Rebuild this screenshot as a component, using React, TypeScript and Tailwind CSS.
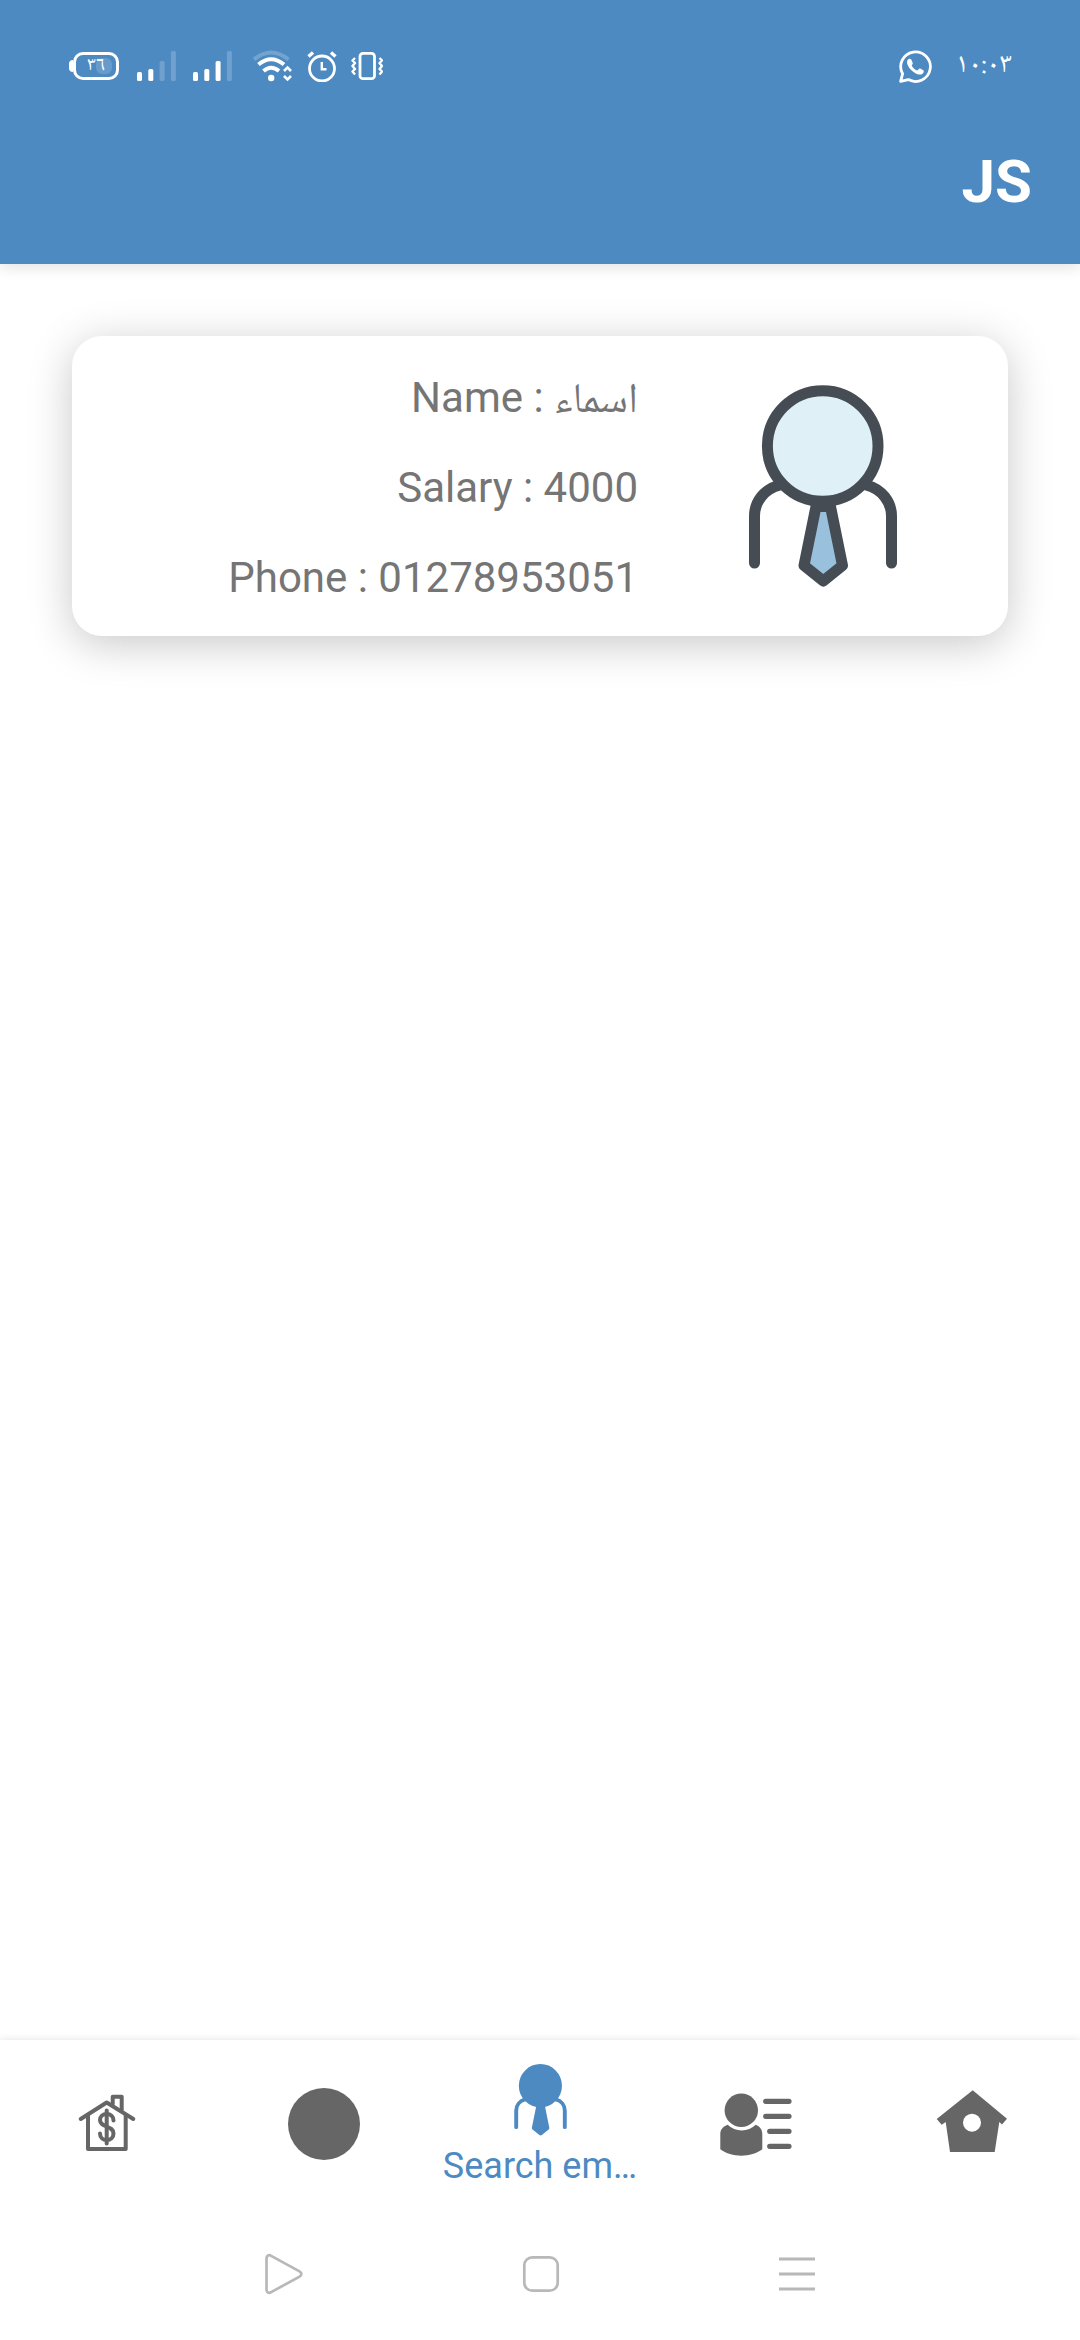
import type { ReactNode } from "react";

function AgentIcon({ className, line, lens, tie }: { className: string; line: string; lens: string; tie: string }) {
  return (
    <svg viewBox="0 0 148 203" className={className} fill="none" stroke={line} strokeWidth="11" strokeLinecap="round" strokeLinejoin="round" aria-hidden="true">
      <path d="M5.5 178V131C5.5 117 15 104 31 100M142.5 178V131C142.5 117 133 104 117 100" />
      <path d="M67 121.500H81.500L93.500 180.500L74.300 196L55 180.500Z" fill={tie} />
      <circle cx="73.700" cy="61" r="55.300" fill={lens} />
    </svg>
  );
}

function Battery() {
  return (
    <div className="flex items-center">
      <div className="h-3 w-1 rounded-l-full bg-white" />
      <div className="relative flex h-7 w-[46px] items-center justify-center rounded-[10px] border-3 border-white">
        <div className="absolute right-1 h-4 w-4 rounded-[6px] bg-white/15" />
        <span className="relative text-[20px] leading-none font-['Noto_Naskh_Arabic','DejaVu_Sans',sans-serif]">٣٦</span>
      </div>
    </div>
  );
}

function Signal({ level }: { level: number }) {
  const bars = [9, 12, 20, 30];
  return (
    <svg viewBox="0 0 40 32" className="h-8 w-10" fill="white" aria-hidden="true">
      {bars.map((h, i) => (
        <rect key={h} x={i * 11.3} y={31 - h} width="5" height={h} rx="1.500" opacity={i < level ? 1 : 0.2} />
      ))}
    </svg>
  );
}

function Wifi() {
  return (
    <svg viewBox="0 0 40 32" className="h-8 w-10" fill="none" stroke="white" aria-hidden="true">
      <path d="M1 9.500Q18 -4.500 35.500 9.500" strokeWidth="4" opacity="0.22" />
      <path d="M5.500 14.500Q18 4 31 14.500" strokeWidth="4" />
      <path d="M10.500 21Q18 14.500 26 21" strokeWidth="4" />
      <circle cx="18.200" cy="28" r="3.200" fill="white" stroke="none" />
      <path d="M31 21L34.500 17.500L38 21M31 26L34.500 29.500L38 26" strokeWidth="2.600" />
    </svg>
  );
}

function Alarm() {
  return (
    <svg viewBox="0 0 30 32" className="h-8 w-[30px]" fill="none" stroke="white" aria-hidden="true">
      <circle cx="15" cy="18.500" r="12.500" strokeWidth="2.800" />
      <path d="M1.500 6.500L6 2.500M28.500 6.500L24 2.500" strokeWidth="3.400" />
      <path d="M14.800 12V19.300H19.500" strokeWidth="2.400" />
    </svg>
  );
}

function Vibrate() {
  return (
    <svg viewBox="0 0 32 32" className="h-8 w-8" fill="none" stroke="white" strokeLinejoin="round" aria-hidden="true">
      <rect x="9" y="3.300" width="14.500" height="25.400" rx="3" strokeWidth="2.800" />
      <path d="M4 8L1.500 10.500L4 13L1.500 16L4 19L1.500 21.500L4 24.500M28.500 8L31 10.500L28.500 13L31 16L28.500 19L31 21.500L28.500 24.500" strokeWidth="2.400" />
    </svg>
  );
}

function WhatsApp() {
  return (
    <svg viewBox="0 0 33 33" className="size-[33px]" fill="none" stroke="white" aria-hidden="true">
      <path d="M1.600 31.400L3.600 23.800A14.800 14.800 0 1 1 9.400 29.600Z" strokeWidth="2.800" strokeLinejoin="round" />
      <path d="M9 9.400C10.500 8.300 12 8.800 12.600 10.300L13.700 13C14 13.800 13.300 14.700 12.700 15.400C13.900 17.800 15.700 19.500 18.200 20.600L20 18.900C20.500 18.500 21 18.500 21.600 18.800L24.300 20.200C25.200 20.800 24.900 22.600 23.600 23.700C21.700 25.200 18.800 24.700 16 23C13 21.200 10.500 18.700 9 15.700C7.900 13.500 7.600 10.900 9 9.400Z" fill="white" stroke="none" />
    </svg>
  );
}

function HouseDollar() {
  return (
    <svg viewBox="0 0 72 72" className="size-18" fill="none" stroke="currentColor" strokeWidth="4" strokeLinecap="round" strokeLinejoin="round" aria-hidden="true">
      <path d="M8.700 31L34.700 14.500L61.300 31" />
      <path d="M16 27V61H53.700V27" />
      <path d="M40.700 16V8.700H49.700V22" />
      <path d="M34.700 22.500V55.500" />
      <path d="M41.500 32.500C41.500 28.500 38.500 26 34.700 26C30.800 26 28 28.500 28 32C28 40 41.500 37 41.500 45.500C41.500 49.500 38.500 52 34.700 52C31 52 28 49.500 28 45.500" />
    </svg>
  );
}

function Disc() {
  return (
    <svg viewBox="0 0 72 72" className="size-18" fill="currentColor" aria-hidden="true">
      <circle cx="36" cy="36" r="36" />
    </svg>
  );
}

function PersonList() {
  return (
    <svg viewBox="0 0 72 72" className="size-18" fill="currentColor" aria-hidden="true">
      <circle cx="21.300" cy="22.300" r="16.700" />
      <path d="M7.700 36.700A20 20 0 0 0 35.700 36.700C40 38.500 42.300 41.500 42.300 46V61.300C31 69.800 11.500 69.800 0.300 61.300V46C0.300 41.500 3 38.500 7.700 36.700Z" />
      <path d="M45.700 13.300H69M45.700 28.300H69M49.700 43.300H69M49.700 58.300H69" stroke="currentColor" strokeWidth="5.200" strokeLinecap="round" />
    </svg>
  );
}

function BirdHouse() {
  return (
    <svg viewBox="0 0 72 72" className="size-18" fill="currentColor" fillRule="evenodd" aria-hidden="true">
      <path d="M36.700 2.300L71 30.700L66 36.500L63.300 34L58.700 64H14L9.700 34L5.700 36.700L0.700 31ZM36 25.700A9 9 0 1 0 36 43.700A9 9 0 1 0 36 25.700Z" />
    </svg>
  );
}

function Tab({ label, children }: { label: string; children: ReactNode }) {
  return (
    <button type="button" aria-label={label} className="flex min-w-0 items-center justify-center text-[#666666]">
      {children}
    </button>
  );
}

export default function App() {
  return (
    <div className="flex min-h-screen flex-col bg-white font-[Roboto,sans-serif]">
      <header className="relative bg-[#4d8ac2] text-white shadow-[0_3px_14px_rgba(0,0,0,0.12)]">
        <div className="flex h-24 items-center justify-between pt-9 pr-[68px] pl-[69px]">
          <div className="flex items-center">
            <Battery />
            <div className="ml-[18px] flex items-center gap-4">
              <Signal level={2} />
              <Signal level={3} />
            </div>
            <div className="ml-5 flex items-center gap-[14px]">
              <Wifi />
              <Alarm />
              <Vibrate />
            </div>
          </div>
          <div className="flex items-center gap-6">
            <WhatsApp />
            <time className="text-[28px] leading-8 font-['Noto_Naskh_Arabic','DejaVu_Sans',sans-serif]">١٠:٠٣</time>
          </div>
        </div>
        <div className="flex h-42 items-center justify-end px-12 pt-1">
          <h1 className="text-[60px] leading-none font-bold">JS</h1>
        </div>
      </header>

      <main className="flex-1 px-18 pt-18">
        <article className="grid grid-cols-[566fr_370fr] items-center rounded-[30px] bg-white py-[33px] shadow-[0_8px_44px_rgba(0,0,0,0.22)]">
          <div className="flex flex-col items-end gap-10 pt-1 text-right text-[42px] leading-[50px] text-[#757575]">
            <p className="font-[Roboto,'Noto_Naskh_Arabic','DejaVu_Sans',sans-serif]">
              Name : <bdi>اسماء</bdi>
            </p>
            <p>Salary : 4000</p>
            <p>Phone : 01278953051</p>
          </div>
          <AgentIcon className="mx-auto h-[203px] w-[148px]" line="#454c54" lens="#dff0f7" tie="#99c0dc" />
        </article>
      </main>

      <nav className="grid h-42 grid-cols-5 bg-white shadow-[0_0_8px_rgba(0,0,0,0.12)]">
        <Tab label="Finance">
          <HouseDollar />
        </Tab>
        <Tab label="Status">
          <Disc />
        </Tab>
        <button type="button" aria-current="page" className="flex min-w-0 flex-col items-center pt-6 text-[#4d8ac2]">
          <AgentIcon className="h-18 w-[53px]" line="currentColor" lens="currentColor" tie="currentColor" />
          <span className="mt-2 text-[36px] leading-[44px]">Search em…</span>
        </button>
        <Tab label="Employees">
          <PersonList />
        </Tab>
        <Tab label="Home">
          <BirdHouse />
        </Tab>
      </nav>

      <footer className="relative flex h-33 items-center justify-center gap-[218px] bg-white text-[#b8b8b8]">
        <button type="button" aria-label="Back">
          <svg viewBox="0 0 40 42" className="h-[42px] w-10" fill="none" stroke="currentColor" strokeWidth="2.700" aria-hidden="true">
            <path d="M2.500 5.500C2.500 2.500 4.800 1.300 7.200 2.900L35.500 18.300C38 19.800 38 22.200 35.500 23.700L7.200 39.100C4.800 40.700 2.500 39.500 2.500 36.500Z" />
          </svg>
        </button>
        <button type="button" aria-label="Home screen">
          <svg viewBox="0 0 38 38" className="size-[38px]" fill="none" stroke="currentColor" strokeWidth="2.700" aria-hidden="true">
            <rect x="2.300" y="2.300" width="33.400" height="33.400" rx="8" />
          </svg>
        </button>
        <button type="button" aria-label="Recent apps">
          <svg viewBox="0 0 38 38" className="size-[38px]" fill="none" stroke="currentColor" strokeWidth="2.800" aria-hidden="true">
            <path d="M1 4H37M1 19H37M1 34H37" />
          </svg>
        </button>
      </footer>
    </div>
  );
}
